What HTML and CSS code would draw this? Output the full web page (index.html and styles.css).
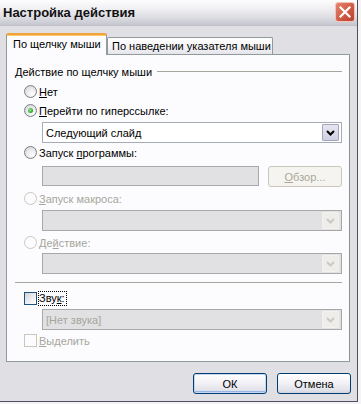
FILE: index.html
```html
<!DOCTYPE html>
<html lang="ru">
<head>
<meta charset="utf-8">
<link rel="stylesheet" href="styles.css">
</head>
<body>
<div class="window">
  <div class="titlebar">
    <span class="title">Настройка действия</span>
    <span class="close"><svg width="12" height="12" viewBox="0 0 12 12"><path d="M1.5 1.5 L10.5 10.5 M10.5 1.5 L1.5 10.5" stroke="#fff" stroke-width="2.2" stroke-linecap="square"/></svg></span>
  </div>
  <div class="body">
    <div class="tabs">
      <div class="tab active">По щелчку мыши</div>
      <div class="tab">По наведении указателя мыши</div>
    </div>
    <div class="panel">
      <div class="legend"><span>Действие по щелчку мыши</span><span class="rule"></span></div>
      <div class="opt first"><span class="radio"></span><span><u>Н</u>ет</span></div>
      <div class="opt"><span class="radio checked"></span><span><u>П</u>ерейти по гиперссылке:</span></div>
      <div class="select gap2"><span>Следующий слайд</span><span class="dd"><svg width="9" height="6" viewBox="0 0 9 6"><path d="M1 1 L4.5 4.5 L8 1" fill="none" stroke="#000" stroke-width="2"/></svg></span></div>
      <div class="opt"><span class="radio"></span><span>Запуск <u>п</u>рограммы:</span></div>
      <div class="progrow">
        <div class="textbox"></div>
        <div class="btn disabled"><u>О</u>бзор...</div>
      </div>
      <div class="opt gap2 off"><span class="radio"></span><span><u>З</u>апуск макроса:</span></div>
      <div class="select gap2 off"><span></span><span class="dd"><svg width="9" height="6" viewBox="0 0 9 6"><path d="M1 1 L4.5 4.5 L8 1" fill="none" stroke="#c9c9c9" stroke-width="2"/></svg></span></div>
      <div class="opt gap2 off"><span class="radio"></span><span>Де<u>й</u>ствие:</span></div>
      <div class="select gap1 off"><span></span><span class="dd"><svg width="9" height="6" viewBox="0 0 9 6"><path d="M1 1 L4.5 4.5 L8 1" fill="none" stroke="#c9c9c9" stroke-width="2"/></svg></span></div>
      <div class="sep"></div>
      <div class="opt check1"><span class="check"></span><span class="focus">Зву<u>к</u>:</span></div>
      <div class="select gap1 off"><span>[Нет звука]</span><span class="dd"><svg width="9" height="6" viewBox="0 0 9 6"><path d="M1 1 L4.5 4.5 L8 1" fill="none" stroke="#c9c9c9" stroke-width="2"/></svg></span></div>
      <div class="opt gap1 off"><span class="check"></span><span><u>В</u>ыделить</span></div>
    </div>
    <div class="buttons">
      <div class="btn default">ОК</div>
      <div class="btn">Отмена</div>
    </div>
  </div>
</div>
</body>
</html>
```

FILE: styles.css
```css
html, body {
  margin: 0;
  padding: 0;
  background: #f4f4f4;
}
body {
  font-family: "Liberation Sans", Arial, sans-serif;
  font-size: 11px;
  color: #000;
}
.window {
  width: 358px;
  height: 402px;
  box-sizing: border-box;
  background: #e0dfe3;
  border-right: 1px solid #4f4f62;
  border-bottom: 1px solid #4f4f62;
  display: flex;
  flex-direction: column;
}
.titlebar {
  height: 26px;
  box-sizing: border-box;
  display: flex;
  align-items: center;
  justify-content: space-between;
  padding: 0 2px 1px 3px;
  background: linear-gradient(#fdfdfe, #f0f0f3 35%, #dcdce2 70%, #c6c6d0);
  border-bottom: 1px solid #c0c0ca;
}
.title {
  font-weight: bold;
  font-size: 13px;
  color: #111;
}
.close {
  width: 20px;
  height: 20px;
  box-sizing: border-box;
  border: 1px solid #f2c4b8;
  border-radius: 3px;
  background: linear-gradient(135deg, #e6866f, #cf5a45 55%, #b8402f);
  display: flex;
  align-items: center;
  justify-content: center;
}
.body {
  padding: 7px 7px 0 6px;
  display: flex;
  flex-direction: column;
}
.tabs {
  display: flex;
  align-items: flex-end;
  height: 21px;
}
.tab {
  height: 17px;
  width: 166px;
  box-sizing: border-box;
  border: 1px solid #919b9c;
  border-bottom: none;
  border-radius: 2px 2px 0 0;
  background: linear-gradient(#fefefe, #f4f4f6 60%, #e4e4ea);
  display: flex;
  align-items: center;
  padding-left: 4px;
  white-space: nowrap;
}
.tab.active {
  width: 101px;
  height: 22px;
  margin-bottom: -1px;
  position: relative;
  z-index: 1;
  background: #fcfcfe;
  border-top: 2px solid #f2a23a;
  padding-left: 6px;
  padding-bottom: 2px;
  box-shadow: inset 0 1px 0 #ffc86a;
}
.panel {
  height: 308px;
  box-sizing: border-box;
  border: 1px solid #919b9c;
  border-right-color: #8d9394;
  background: #fcfcfe;
  padding: 8px 7px 0 8px;
  display: flex;
  flex-direction: column;
}
.legend {
  height: 17px;
  display: flex;
  align-items: center;
}
.rule {
  flex: 1;
  height: 1px;
  background: #a7a7a0;
  margin-left: 5px;
}
.opt {
  height: 19px;
  display: flex;
  align-items: center;
  padding-left: 9px;
  white-space: nowrap;
}
.opt.first { margin-top: 2px; }
.gap1 { margin-top: 1px; }
.gap2 { margin-top: 2px; }
.off { color: #a6a69c; }
.radio {
  width: 13px;
  height: 13px;
  box-sizing: border-box;
  border-radius: 50%;
  border: 1px solid #7a7e88;
  background: radial-gradient(circle at 65% 70%, #ffffff, #e6e6e8 55%, #cfcfd4);
  margin-right: 2px;
  display: flex;
  align-items: center;
  justify-content: center;
  flex: none;
}
.radio.checked::after {
  content: "";
  width: 5px;
  height: 5px;
  border-radius: 50%;
  background: radial-gradient(circle at 40% 40%, #9de89d, #21a121 70%);
}
.off .radio {
  border-color: #cac8bb;
  background: #fcfcfe;
}
.select {
  margin-left: 27px;
  height: 21px;
  box-sizing: border-box;
  border: 1px solid #a5acb5;
  background: #fff;
  display: flex;
  align-items: center;
  justify-content: space-between;
  padding: 0 2px 0 3px;
}
.select.off {
  background: #e1e1e3;
  border-color: #a8a8a8;
}
.dd {
  width: 17px;
  height: 17px;
  box-sizing: border-box;
  border: 1px solid #a6a6b8;
  border-radius: 1px;
  background: linear-gradient(#e6e6f2, #cfd0e4);
  display: flex;
  align-items: center;
  justify-content: center;
}
.off .dd {
  border-color: #f2f2ee;
  background: #eeede8;
}
.progrow {
  margin-top: 4px;
  margin-left: 27px;
  height: 21px;
  display: flex;
  align-items: flex-start;
  justify-content: space-between;
}
.textbox {
  width: 217px;
  height: 20px;
  box-sizing: border-box;
  border: 1px solid #a8a8a8;
  background: #e1e1e3;
}
.btn {
  width: 74px;
  height: 21px;
  box-sizing: border-box;
  border: 1px solid #003c74;
  border-radius: 3px;
  background: linear-gradient(#ffffff, #f4f4f8 40%, #e2e2ea 85%, #d2d2de);
  display: flex;
  align-items: center;
  justify-content: center;
}
.btn.disabled {
  border-color: #c9c7ba;
  background: #f5f4f0;
  color: #aca899;
}
.btn.default {
  box-shadow: inset 0 0 0 1px #c4d8f4, inset 0 -2px 0 #97b4e6;
}
.sep {
  margin-top: 8px;
  height: 1px;
  background: #a7a7a0;
}
.check1 { margin-top: 6px; }
.check {
  width: 13px;
  height: 13px;
  box-sizing: border-box;
  border: 1px solid #1c5180;
  background: linear-gradient(135deg, #d4d4d8, #f4f4f6 70%, #fff);
  margin-right: 2px;
  flex: none;
}
.off .check {
  border-color: #cac8bb;
  background: #fcfcfe;
}
.focus {
  outline: 1px dotted #000;
  outline-offset: 0;
  padding: 0 1px 0 0;
  line-height: 13px;
}
.buttons {
  margin-top: 11px;
  margin-right: -1px;
  display: flex;
  justify-content: flex-end;
  gap: 10px;
}
```
